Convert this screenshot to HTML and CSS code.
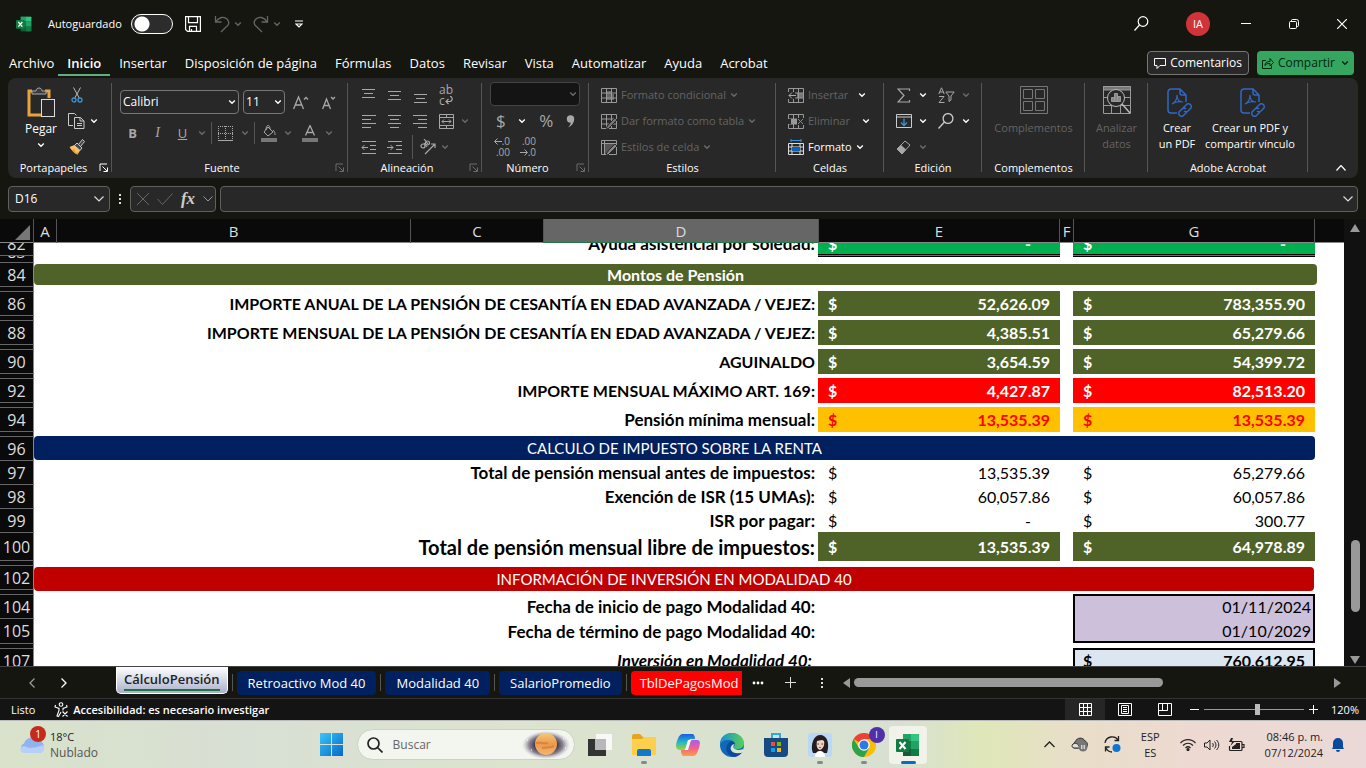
FILE: index.html
```html
<!DOCTYPE html>
<html lang="es">
<head>
<meta charset="utf-8">
<title>Excel</title>
<link rel="stylesheet" href="styles.css">
</head>
<body>
<svg class="defs" aria-hidden="true">
  <symbol id="chev" viewBox="0 0 8 8"><path d="M1.2 2.6 4 5.2 6.8 2.6" fill="none" stroke="currentColor" stroke-width="1.4"/></symbol>
  <symbol id="launch" viewBox="0 0 10 10"><path d="M1 8V1h7M3.500 3.500 8 8M8.500 4.500v4h-4" fill="none" stroke="currentColor"/></symbol>
  <symbol id="excel" viewBox="0 0 24 24"><path d="M7 1h16v22H7z" fill="#185c37"/><path d="M7 1h8v7H7z" fill="#21a366"/><path d="M15 1h7a1 1 0 0 1 1 1v6h-8z" fill="#33c481"/><path d="M7 8h8v8H7z" fill="#107c41"/><path d="M15 8h8v8h-8z" fill="#21a366"/><path d="M15 16h8v7h-8z" fill="#107c41"/><rect y="6" width="13" height="13" rx="1" fill="#107c41"/><path d="m3.500 9 6 7m0-7-6 7" stroke="#fff" stroke-width="2"/></symbol>
  <symbol id="pdf" viewBox="-3 -2 28 30" overflow="visible"><g fill="none" stroke="#3068c4" stroke-width="1.500"><path d="M11 25H5a3 3 0 0 1-3-3V4a3 3 0 0 1 3-3h9l6 6v7M14 1v4a2 2 0 0 0 2 2h4"/><path d="M6 16c4-2 5-6 5-9 0 4 2 7 6 7-4-1-8 0-11 2z" stroke-width="1.200"/><path d="m17 20 4-4a3 3 0 0 1 4 4l-3 3a3 3 0 0 1-4 0M20 21a3 3 0 0 0-4 0l-3 3a3 3 0 0 0 4 4l4-4"/></g></symbol>
  <symbol id="tbl" viewBox="0 0 16 15"><path d="M.5.500h15v14H.5zM.5 5h15M.5 10h15M5.500.500v14M10.500.500v14" fill="none" stroke="currentColor"/></symbol>
</svg>

<div class="window">
<header class="titlebar">
  <svg width="16" height="16"><use href="#excel"/></svg>
  <label class="autosave">Autoguardado <input type="checkbox" class="toggle"></label>
  <button class="plain save" aria-label="Guardar"><svg width="16" height="16" fill="none" stroke="#fff" stroke-width="1.200"><path d="M.6.600h14.800v14.800H2.600l-2-2zM3.500.600v6h9v-6M4.500 15.400v-5h7v5M6.500 15v-2"/></svg></button>
  <button class="plain dimmer" aria-label="Deshacer"><svg width="16" height="18" fill="none" stroke="currentColor" stroke-width="1.300"><path d="M1.500 1v6h6M1.500 7C5 2 10 1 13 4s2 6-1 8l-5 5"/></svg></button>
  <svg class="dimmer" width="8" height="8"><use href="#chev"/></svg>
  <button class="plain dimmer redo" aria-label="Rehacer"><svg width="16" height="18" fill="none" stroke="currentColor" stroke-width="1.300"><path d="M14.500 1v6h-6M14.500 7C11 2 6 1 3 4s-2 6 1 8l5 5"/></svg></button>
  <svg class="dimmer" width="8" height="8"><use href="#chev"/></svg>
  <button class="plain custom" aria-label="Personalizar"><svg width="8" height="8" fill="none" stroke="#fff" stroke-width="1.200"><path d="M0 1h8M1 4l3 3 3-3z"/></svg></button>
  <div class="grow"></div>
  <button class="winbtn" aria-label="Buscar"><svg width="15" height="15" fill="none" stroke="#fff" stroke-width="1.200"><circle cx="9" cy="5.500" r="4.800"/><path d="M5.500 9 .5 14.500"/></svg></button>
  <button class="avatar">IA</button>
  <button class="winbtn" aria-label="Minimizar"><svg width="10" height="10" stroke="#fff"><path d="M0 4.500h10"/></svg></button>
  <button class="winbtn" aria-label="Restaurar"><svg width="10" height="10" fill="none" stroke="#fff"><rect x=".5" y="2.500" width="7" height="7" rx="1"/><path d="M2.500 2.500v-1a1 1 0 0 1 1-1h4a2 2 0 0 1 2 2v4a1 1 0 0 1-1 1h-1"/></svg></button>
  <button class="winbtn" aria-label="Cerrar"><svg width="10" height="10" stroke="#fff" stroke-width="1.200"><path d="m0 0 10 10M10 0 0 10"/></svg></button>
</header>

<nav class="tabs">
  <a href="#">Archivo</a><a href="#" class="on">Inicio</a><a href="#">Insertar</a><a href="#">Disposición de página</a><a href="#">Fórmulas</a><a href="#">Datos</a><a href="#">Revisar</a><a href="#">Vista</a><a href="#">Automatizar</a><a href="#">Ayuda</a><a href="#">Acrobat</a>
  <div class="grow"></div>
  <button class="comments"><svg width="12" height="12" fill="none" stroke="#fff"><path d="M.5 1.500h11v7H6l-3 3v-3H.5z"/></svg>Comentarios</button>
  <button class="share"><svg width="12" height="12" fill="none" stroke="currentColor"><path d="M4 3.500H.5v8h9v-3M3 8.500c0-3 2-4 5-4v-3l3.500 4L8 9V6.500c-3 0-4 .500-5 2z"/></svg>Compartir<svg class="end" width="8" height="8"><use href="#chev"/></svg></button>
</nav>

<section class="ribbon">
  <div class="group g-clip">
    <div class="body clip">
      <button class="big paste"><svg width="28" height="30" fill="none"><path d="M5 4H2v24h12M18 4h4v7" stroke="#e8a33d" stroke-width="3"/><path d="M5 7V4h4c0-4 6-4 6 0h4v3z" fill="#3a3a3a" stroke="#aaa"/><rect x="14.500" y="12.500" width="13" height="17" fill="#282828" stroke="#ddd"/></svg>Pegar<svg width="8" height="8"><use href="#chev"/></svg></button>
      <div class="stack">
        <button class="plain" aria-label="Cortar"><svg width="12" height="16" fill="none"><path d="m2.500.500 6 11M9.500.500l-6 11" stroke="#bbb"/><circle cx="3" cy="13" r="2" stroke="#3b93d8" stroke-width="1.300"/><circle cx="9" cy="13" r="2" stroke="#3b93d8" stroke-width="1.300"/></svg></button>
        <div class="row"><button class="plain" aria-label="Copiar"><svg width="17" height="16" fill="none" stroke="#ccc"><path d="M5 12.500H.5V.500h6l2 2M6.500 4.500h6l3.500 3.500v7.500H6.500zM12 4.500V8h4M9 10.500h5M9 12.500h5"/></svg></button><svg width="8" height="8"><use href="#chev"/></svg></div>
        <button class="plain" aria-label="Copiar formato"><svg width="16" height="16"><path d="m.5 8 5-2 6 5-3 4.500c-3-1-6-4-8-7.500z" fill="#f3c26b"/><path d="m3 11 2-1 2 4 3-1-1.500 2.500C6 14.500 4.500 13 3 11z" fill="#e8972d"/><path d="M5.500 6.500 8 4l5 5-2 2.500z" fill="#444" stroke="#ccc"/><path d="m9.500 5.500 4-5 2 2-4 5z" fill="#444" stroke="#ccc"/></svg></button>
      </div>
    </div>
    <div class="cap">Portapapeles<svg class="launch" width="10" height="10"><use href="#launch"/></svg></div>
  </div>
  <div class="group g-font">
    <div class="body font">
      <div class="row">
        <label class="combo wide"><select aria-label="Fuente"><option>Calibri</option></select><svg width="8" height="8"><use href="#chev"/></svg></label>
        <label class="combo"><select aria-label="Tamaño"><option>11</option></select><svg width="8" height="8"><use href="#chev"/></svg></label>
        <button class="plain grey fa" aria-label="Aumentar"><svg width="16" height="15" fill="none" stroke="currentColor" stroke-width="1.300"><path d="M.6 14 5.500 2l5 12M2.300 10h6.500M11 4.500l2-2 2 2"/></svg></button>
        <button class="plain grey fa" aria-label="Reducir"><svg width="16" height="15" fill="none" stroke="currentColor" stroke-width="1.300"><path d="M2.600 14 6.500 4l4 10M4 10.500h5M11 2l2 2 2-2"/></svg></button>
      </div>
      <div class="row fmt">
        <button class="plain grey"><b>B</b></button><button class="plain grey slant">I</button><button class="plain grey"><u>U</u></button><svg class="dim" width="8" height="8"><use href="#chev"/></svg><i class="vs"></i>
        <button class="plain grey" aria-label="Bordes"><svg width="15" height="15" fill="none" stroke="currentColor" stroke-dasharray="1 1"><path d="M.5 0v14M14.500 0v14M0 .500h15M7.500 0v14M0 7.500h15"/><path d="M0 14.500h15" stroke-dasharray="none"/></svg></button><svg class="dim" width="8" height="8"><use href="#chev"/></svg><i class="vs"></i>
        <button class="plain grey" aria-label="Relleno"><svg width="16" height="17" fill="none" stroke="currentColor"><path d="m7 2 5 5-5 4-4-4zM5 5c0-6 4-6 4-1M12 5c2 2 2 3 2 5"/><path d="M0 13h16v4H0z" fill="#777" stroke="none"/></svg></button><svg class="dim" width="8" height="8"><use href="#chev"/></svg>
        <button class="plain grey" aria-label="Color"><svg width="16" height="17" fill="none" stroke="currentColor" stroke-width="1.300"><path d="M3.500 10.500 8 .500l4.500 10M5 7.500h6"/><path d="M0 13h16v4H0z" fill="#777" stroke="none"/></svg></button><svg class="dim" width="8" height="8"><use href="#chev"/></svg>
      </div>
    </div>
    <div class="cap">Fuente<svg class="launch dim" width="10" height="10"><use href="#launch"/></svg></div>
  </div>
  <div class="group g-align">
    <div class="body cells">
      <button class="plain grey" aria-label="Arriba"><svg width="15" height="15" stroke="currentColor"><path d="M1 1.500h13M3 5.500h9M1 9.500h13"/></svg></button><button class="plain grey" aria-label="Medio"><svg width="15" height="15" stroke="currentColor"><path d="M1 3.500h13M3 7.500h9M1 11.500h13"/></svg></button><button class="plain grey" aria-label="Abajo"><svg width="15" height="15" stroke="currentColor"><path d="M1 6.500h13M3 10.500h9M1 14.500h13"/></svg></button><button class="plain grey wrap" aria-label="Ajustar texto"><span>ab</span><span>c<svg width="8" height="9" fill="none" stroke="currentColor" stroke-width="1.200"><path d="M5 .500c3 0 3 5-.500 5H1M3.500 3 1 5.500 3.500 8"/></svg></span></button><span></span>
      <button class="plain grey" aria-label="Izquierda"><svg width="15" height="15" stroke="currentColor"><path d="M1 1.500h14M1 5.500h9M1 9.500h14M1 13.500h9"/></svg></button><button class="plain grey" aria-label="Centro"><svg width="15" height="15" stroke="currentColor"><path d="M1 1.500h13M3 5.500h9M1 9.500h13M3 13.500h9"/></svg></button><button class="plain grey" aria-label="Derecha"><svg width="15" height="15" stroke="currentColor"><path d="M0 1.500h14M5 5.500h9M0 9.500h14M5 13.500h9"/></svg></button><button class="plain grey" aria-label="Combinar"><svg width="15" height="15" fill="none" stroke="currentColor"><path d="M.5.500h14v14H.5zM.5 3.500h14M.5 11.500h14M7.500.500v3M7.500 11.500v3M3 7.500h9M5 5.500l-2 2 2 2M10 5.500l2 2-2 2"/></svg></button><svg class="dim" width="8" height="8"><use href="#chev"/></svg>
      <button class="plain grey" aria-label="Menos sangría"><svg width="15" height="15" fill="none" stroke="currentColor"><path d="M1 1.500h14M9 5.500h6M9 9.500h6M1 13.500h14M1 7.500h6M3.500 5l-2.500 2.500L3.500 10"/></svg></button><button class="plain grey" aria-label="Más sangría"><svg width="15" height="15" fill="none" stroke="currentColor"><path d="M1 1.500h14M9 5.500h6M9 9.500h6M1 13.500h14M0 7.500h6M3.500 5 6 7.500 3.500 10"/></svg></button><button class="plain grey ori" aria-label="Orientación"><svg width="18" height="16" fill="none" stroke="currentColor" stroke-width="1.200"><circle cx="4" cy="7" r="2"/><path d="m5 4 3 4"/><circle cx="8.500" cy="4" r="2"/><path d="m5 0 4 5M6 15 16 5M12 5h4v4"/></svg><svg class="dim" width="8" height="8"><use href="#chev"/></svg></button>
    </div>
    <div class="cap">Alineación<svg class="launch dim" width="10" height="10"><use href="#launch"/></svg></div>
  </div>
  <div class="group g-num">
    <div class="body num">
      <label class="combo black"><select aria-label="Formato de número"><option></option></select><svg class="dim" width="8" height="8"><use href="#chev"/></svg></label>
      <div class="row syms"><button class="plain grey">$</button><svg width="8" height="8"><use href="#chev"/></svg><button class="plain grey">%</button><button class="plain grey" aria-label="Millares"><svg width="9" height="13"><circle cx="4.500" cy="4" r="3.700" fill="currentColor"/><path d="M8 4c0 4-2 7-6 8.500C4.500 10 5 8 5 6z" fill="currentColor"/></svg></button></div>
      <div class="row dec"><button class="plain grey"><span><svg width="8" height="7" fill="none" stroke="currentColor"><path d="M8 3.500H1M3.500.500l-3 3 3 3"/></svg>.0</span><span>.00</span></button><button class="plain grey"><span>.00</span><span><svg width="8" height="7" fill="none" stroke="currentColor"><path d="M0 3.500h7M4.500.500l3 3-3 3"/></svg>.0</span></button></div>
    </div>
    <div class="cap">Número<svg class="launch dim" width="10" height="10"><use href="#launch"/></svg></div>
  </div>
  <div class="group g-style">
    <div class="body list off">
      <button><svg width="16" height="15"><path d="M6 3h4v3h3v6H6z" fill="#666"/><use href="#tbl"/></svg>Formato condicional<svg class="dim" width="8" height="8"><use href="#chev"/></svg></button>
      <button><svg width="16" height="15"><use href="#tbl"/><path d="m5 14 3-4 6-6 2 2-6 6-3 3z" fill="#777" stroke="#282828"/></svg>Dar formato como tabla<svg class="dim" width="8" height="8"><use href="#chev"/></svg></button>
      <button><svg width="16" height="15"><path d="M.5.500h15v14H.5zM.5 3.500h15M3.500.500v14" fill="none" stroke="currentColor"/><path d="M4 4h9v6l-6 4H4z" fill="#555"/><path d="m5 14 3-4 6-6 2 2-6 6-3 3z" fill="#888" stroke="#282828"/></svg>Estilos de celda<svg class="dim" width="8" height="8"><use href="#chev"/></svg></button>
    </div>
    <div class="cap">Estilos</div>
  </div>
  <div class="group g-cell">
    <div class="body list off">
      <button><svg width="16" height="15"><path d="M9 5h6v5H9z" fill="#777"/><use href="#tbl"/><path d="M0 4h7v7H0z" fill="#282828"/><path d="M1 7.500h7M4 4.500l-3 3 3 3" fill="none" stroke="#aaa"/></svg><span class="grow">Insertar</span><svg class="lit" width="8" height="8"><use href="#chev"/></svg></button>
      <button class="del"><svg width="16" height="15"><use href="#tbl"/><path d="M9 4h7v7H9zM0 5h3v5H0z" fill="#282828"/><path d="M3 5h6v5H3z" fill="#999"/><path d="m10 5 5 5m0-5-5 5" stroke="#888"/></svg><span class="grow">Eliminar</span><svg class="lit" width="8" height="8"><use href="#chev"/></svg></button>
      <button class="lit"><svg width="16" height="16" fill="none"><path d="M.5 4.500h15v11H.5zM.5 8h15M.5 12h15M4 4v11M12 4v11" stroke="#ddd"/><path d="M4 8h8v4H4z" fill="#0a64b4"/><path d="M3 1.500h10M3 0v3M13 0v3" stroke="#3b93d8"/></svg>Formato<svg width="8" height="8"><use href="#chev"/></svg></button>
    </div>
    <div class="cap">Celdas</div>
  </div>
  <div class="group g-edit">
    <div class="body edit">
      <button class="plain grey" aria-label="Suma"><svg width="14" height="15" fill="none" stroke="currentColor" stroke-width="1.200"><path d="M12.500 3V1H1l6 6.500L1 14h11.500v-2"/></svg></button><svg width="8" height="8"><use href="#chev"/></svg><button class="plain grey az" aria-label="Ordenar y filtrar"><svg width="17" height="17" fill="none" stroke="currentColor"><path d="M.8 7 3.500.800 6.200 7M1.600 5h3.800M1 9.500h5L1 15.500h5.500M7.800 5h8.400L13 9v4l-2 1.500V9z"/></svg></button><svg class="dim" width="8" height="8"><use href="#chev"/></svg>
      <button class="plain" aria-label="Rellenar"><svg width="16" height="14" fill="none" stroke="#ccc"><path d="M.5.500h15v13H.5zM.5 3h15"/><path d="M8 4.500V11M5 8.500l3 3 3-3" stroke="#3b93d8" stroke-width="1.300"/></svg></button><svg width="8" height="8"><use href="#chev"/></svg><button class="plain" aria-label="Buscar y seleccionar"><svg width="16" height="16" fill="none" stroke="#ccc" stroke-width="1.300"><circle cx="10" cy="5.500" r="4.900"/><path d="M6.500 9 .5 15.500"/></svg></button><svg width="8" height="8"><use href="#chev"/></svg>
      <button class="plain grey" aria-label="Borrar"><svg width="16" height="15"><path d="m1 9 8-8 5 4-8 9z" fill="none" stroke="currentColor"/><path d="m1 9 4-4 5 4.500-4 4.500z" fill="currentColor"/></svg></button><svg class="dim" width="8" height="8"><use href="#chev"/></svg>
    </div>
    <div class="cap">Edición</div>
  </div>
  <div class="group g-comp">
    <div class="body"><button class="big off"><svg width="28" height="28" fill="none" stroke="#777"><path d="M.5.500h27v27H.5zM3.500 3.500h9v9h-9zM15.500 3.500h9v9h-9zM3.500 15.500h9v9h-9zM15.500 15.500h9v9h-9z"/></svg>Complementos</button></div>
    <div class="cap">Complementos</div>
  </div>
  <div class="group g-an">
    <div class="body"><button class="big off"><svg width="28" height="28" fill="none" stroke="#999"><path d="M0 0h28v4H0z" fill="#777"/><path d="M.5.500h27v27H.5zM.5 11.500h27M.5 19.500h27M8.500 19v8M17.500 19v8"/><circle cx="13" cy="12" r="8.500" fill="#282828" stroke="#bbb"/><path d="m19 18 8 9" stroke="#bbb" stroke-width="1.500"/><path d="M8.500 11.500h3v4h-3zM11.500 7.500h3v8h-3zM14.500 10.500h3v5h-3z" fill="#888"/></svg>Analizar<br>datos</button></div>
    <div class="cap"></div>
  </div>
  <div class="group g-pdf">
    <div class="body pdfs"><button class="big"><svg width="28" height="30"><use href="#pdf"/></svg>Crear<br>un PDF</button><button class="big"><svg width="28" height="30"><use href="#pdf"/></svg>Crear un PDF y<br>compartir vínculo</button></div>
    <div class="cap">Adobe Acrobat</div>
  </div>
  <button class="collapse" aria-label="Contraer"><svg width="10" height="6" fill="none" stroke="#fff" stroke-width="1.200"><path d="m.5 5.500 4.500-5 4.500 5"/></svg></button>
</section>

<section class="fbar">
  <label class="fbox name"><input type="text" value="D16" aria-label="Cuadro de nombres"><svg width="10" height="6" fill="none" stroke="#ddd" stroke-width="1.200"><path d="m.5.500 4.500 4.500L9.500.500"/></svg></label>
  <span class="dots"></span>
  <div class="fbox fx"><button class="plain dimmer" aria-label="Cancelar"><svg width="12" height="12" stroke="currentColor"><path d="m0 0 12 12M12 0 0 12"/></svg></button><button class="plain dimmer" aria-label="Introducir"><svg width="16" height="12" fill="none" stroke="currentColor"><path d="m.5 6 5 5.500L15.500.500"/></svg></button><button class="plain fn">fx</button><svg width="10" height="6" fill="none" stroke="#999"><path d="m.5.500 4.500 4.500L9.500.500"/></svg></div>
  <label class="fbox formula"><input type="text" aria-label="Fórmula"><svg width="10" height="6" fill="none" stroke="#ddd" stroke-width="1.200"><path d="m.5.500 4.500 4.500L9.500.500"/></svg></label>
</section>

<main class="sheet">
  <div class="pane">
    <div class="colhead"><span class="corner"><svg width="15" height="15"><path d="M15 0v15H0z" fill="#777"/></svg></span><span>A</span><span>B</span><span>C</span><span class="sel">D</span><span>E</span><span>F</span><span>G</span></div>
    <div class="view">
    <table>
      <colgroup><col class="ch"><col class="ca"><col class="cb"><col class="cc"><col class="cd"><col class="ce"><col class="cf"><col class="ce"><col></colgroup>
      <tr class="r24"><th>82</th><td colspan="4" class="lab">Ayuda asistencial por soledad:</td><td rowspan="2" class="top"><div class="acc total"><span>$</span><span class="dash">-</span></div></td><td></td><td rowspan="2" class="top"><div class="acc total"><span>$</span><span class="dash">-</span></div></td><td></td></tr>
      <tr class="r7"><th><div class="cut"><span>83</span></div></th><td colspan="4"></td><td></td><td></td></tr>
      <tr class="r24"><th>84</th><td colspan="8" class="top"><div class="bar green">Montos de Pensión</div></td></tr>
      <tr class="r5"><th></th></tr>
      <tr class="r24"><th>86</th><td colspan="4" class="lab caps">IMPORTE ANUAL DE LA PENSIÓN DE CESANTÍA EN EDAD AVANZADA / VEJEZ:</td><td class="olive"><div class="acc"><span>$</span><span>52,626.09</span></div></td><td></td><td class="olive"><div class="acc"><span>$</span><span>783,355.90</span></div></td></tr>
      <tr class="r5"><th></th></tr>
      <tr class="r24"><th>88</th><td colspan="4" class="lab caps">IMPORTE MENSUAL DE LA PENSIÓN DE CESANTÍA EN EDAD AVANZADA / VEJEZ:</td><td class="olive"><div class="acc"><span>$</span><span>4,385.51</span></div></td><td></td><td class="olive"><div class="acc"><span>$</span><span>65,279.66</span></div></td></tr>
      <tr class="r5"><th></th></tr>
      <tr class="r24"><th>90</th><td colspan="4" class="lab caps">AGUINALDO</td><td class="olive"><div class="acc"><span>$</span><span>3,654.59</span></div></td><td></td><td class="olive"><div class="acc"><span>$</span><span>54,399.72</span></div></td></tr>
      <tr class="r5"><th></th></tr>
      <tr class="r24"><th>92</th><td colspan="4" class="lab caps">IMPORTE MENSUAL MÁXIMO ART. 169:</td><td class="red"><div class="acc"><span>$</span><span>4,427.87</span></div></td><td></td><td class="red"><div class="acc"><span>$</span><span>82,513.20</span></div></td></tr>
      <tr class="r5"><th></th></tr>
      <tr class="r24"><th>94</th><td colspan="4" class="lab">Pensión mínima mensual:</td><td class="amber"><div class="acc"><span>$</span><span>13,535.39</span></div></td><td></td><td class="amber"><div class="acc"><span>$</span><span>13,535.39</span></div></td></tr>
      <tr class="r5"><th></th></tr>
      <tr class="r24"><th>96</th><td colspan="7" class="top"><div class="bar navy">CALCULO DE IMPUESTO SOBRE LA RENTA</div></td></tr>
      <tr class="r24"><th>97</th><td colspan="4" class="lab">Total de pensión mensual antes de impuestos:</td><td><div class="acc"><span>$</span><span>13,535.39</span></div></td><td></td><td><div class="acc"><span>$</span><span>65,279.66</span></div></td></tr>
      <tr class="r24"><th>98</th><td colspan="4" class="lab">Exención de ISR (15 UMAs):</td><td><div class="acc"><span>$</span><span>60,057.86</span></div></td><td></td><td><div class="acc"><span>$</span><span>60,057.86</span></div></td></tr>
      <tr class="r24"><th>99</th><td colspan="4" class="lab">ISR por pagar:</td><td><div class="acc"><span>$</span><span class="dash">-</span></div></td><td></td><td><div class="acc"><span>$</span><span>300.77</span></div></td></tr>
      <tr class="r28"><th>100</th><td colspan="4" class="lab large">Total de pensión mensual libre de impuestos:</td><td class="olive"><div class="acc"><span>$</span><span>13,535.39</span></div></td><td></td><td class="olive"><div class="acc"><span>$</span><span>64,978.89</span></div></td></tr>
      <tr class="r5"><th></th></tr>
      <tr class="r24"><th>102</th><td colspan="7" rowspan="2" class="top"><div class="bar crimson">INFORMACIÓN DE INVERSIÓN EN MODALIDAD 40</div></td></tr>
      <tr class="r5"><th></th></tr>
      <tr class="r24"><th>104</th><td colspan="4" class="lab">Fecha de inicio de pago Modalidad 40:</td><td></td><td></td><td class="date first">01/11/2024</td></tr>
      <tr class="r25"><th>105</th><td colspan="4" class="lab">Fecha de término de pago Modalidad 40:</td><td></td><td></td><td class="date last">01/10/2029</td></tr>
      <tr class="r5"><th></th></tr>
      <tr class="r24"><th>107</th><td colspan="4" class="lab ital">Inversión en Modalidad 40:</td><td></td><td></td><td class="invest"><div class="acc"><span>$</span><span>760,612.95</span></div></td></tr>
    </table>
    </div>
  </div>
  <div class="vscroll"><svg width="10" height="8"><path d="m5 0 5 8H0z" fill="#999"/></svg><div class="track"><div class="thumb"></div></div><svg width="10" height="8"><path d="M0 0h10L5 8z" fill="#999"/></svg></div>
</main>

<nav class="sheets">
  <button class="plain nav" aria-label="Anterior"><svg width="6" height="10" fill="none" stroke="#999" stroke-width="1.300"><path d="m5.500.500-4.500 4.500 4.500 4.500"/></svg></button>
  <button class="plain nav" aria-label="Siguiente"><svg width="6" height="10" fill="none" stroke="#fff" stroke-width="1.300"><path d="m.5.500 4.500 4.500-4.500 4.500"/></svg></button>
  <div class="tablist"><button class="st active"><span>CálculoPensión</span></button><i></i><button class="st blue">Retroactivo Mod 40</button><i></i><button class="st blue">Modalidad 40</button><i></i><button class="st blue">SalarioPromedio</button><i></i><button class="st redtab">TblDePagosMod</button></div>
  <button class="plain more" aria-label="Más hojas"><svg width="12" height="4" fill="#fff"><circle cx="2" cy="2" r="1.400"/><circle cx="6" cy="2" r="1.400"/><circle cx="10" cy="2" r="1.400"/></svg></button>
  <button class="plain more" aria-label="Hoja nueva"><svg width="11" height="11" stroke="#ddd"><path d="M5.500 0v11M0 5.500h11"/></svg></button>
  <button class="plain more" aria-label="Opciones"><span class="dots"></span></button>
  <div class="hscroll"><svg width="8" height="10"><path d="M8 0v10L1 5z" fill="#999"/></svg><div class="htrack"><div class="thumb"></div></div><svg width="8" height="10"><path d="M0 0v10l7-5z" fill="#999"/></svg></div>
</nav>

<footer class="status">
  <span>Listo</span>
  <button class="plain acces"><svg width="15" height="15" fill="none" stroke="#fff" stroke-width="1.100"><circle cx="7" cy="2.500" r="1.800"/><path d="M1.500 3 1 5l4 1.500v2L3 14l1.500.500L7 10M12.500 3l.5 2-4 1.500v2M8.500 9.500l5 5M13.500 9.500l-5 5"/></svg><b>Accesibilidad: es necesario investigar</b></button>
  <div class="grow"></div>
  <button class="vw on" aria-label="Normal"><svg width="13" height="13" fill="none" stroke="#fff"><path d="M.5.500h12v12H.5zM4.500.500v12M8.500.500v12M.5 4.500h12M.5 8.500h12"/></svg></button>
  <button class="vw" aria-label="Diseño"><svg width="14" height="13" fill="none" stroke="#fff"><path d="M.5.500h13v12H.5zM3.500 2.500h7v8h-7zM5 4.500h4M5 6.500h4M5 8.500h4"/></svg></button>
  <button class="vw" aria-label="Saltos"><svg width="14" height="13" fill="none" stroke="#fff"><path d="M.5.500h13v12H.5zM4.500.500v7M9.500.500v7M.5 7.500h9"/></svg></button>
  <button class="plain zb" aria-label="Alejar"><svg width="9" height="9" stroke="#fff"><path d="M0 4.500h9"/></svg></button>
  <input type="range" class="zoom" min="0" max="100" value="54" aria-label="Zoom">
  <button class="plain zb" aria-label="Acercar"><svg width="9" height="9" stroke="#fff"><path d="M4.500 0v9M0 4.500h9"/></svg></button>
  <span class="pct">120%</span>
</footer>
</div>

<footer class="taskbar">
  <div class="weather"><div class="cloud"><svg width="26" height="18"><path d="M6 17a5 5 0 0 1-1-9.500C7 1 15 0 18 5c5-1 7 3 7 6s-2 6-5 6z" fill="#8fb4ee"/><path d="M6 17c-6 0-6-6-1-7 5 3 12 2 19-1 3 4 0 8-4 8z" fill="#b7d0f7"/></svg><span class="badge">1</span></div><div>18°C<br><small>Nublado</small></div></div>
  <div class="apps">
    <button class="app" aria-label="Inicio"><svg width="24" height="24"><defs><linearGradient id="w" x2="1" y2="1"><stop stop-color="#3cc4f8"/><stop offset="1" stop-color="#0568c8"/></linearGradient></defs><path d="M0 0h11v11H0zM12 0h11v11H12zM0 12h11v11H0zM12 12h11v11H12z" fill="url(#w)"/></svg></button>
    <label class="search"><svg width="16" height="16" fill="none" stroke="#222" stroke-width="1.700"><circle cx="6.500" cy="6.500" r="5.500"/><path d="m10.500 10.500 5 5"/></svg><input type="search" placeholder="Buscar" aria-label="Buscar"><svg width="48" height="28"><defs><radialGradient id="h"><stop offset=".4" stop-color="#2b2438"/><stop offset=".7" stop-color="#6c6478" stop-opacity=".8"/><stop offset="1" stop-color="#b8b0c0" stop-opacity="0"/></radialGradient><linearGradient id="pl" x2="0" y2="1"><stop stop-color="#f7c87c"/><stop offset=".5" stop-color="#eb9a4c"/><stop offset="1" stop-color="#f0b870"/></linearGradient></defs><ellipse cx="24" cy="14" rx="24" ry="14" fill="url(#h)"/><circle cx="24" cy="13" r="11" fill="url(#pl)"/><path d="M14 12c5-1 8 1 12 0M20 17c4-1 8 0 12-2" fill="none" stroke="#dc8340" stroke-width="2"/><path d="M5 9h1M9 19h1M41 8h1M43 17h1" stroke="#fff"/></svg></label>
    <button class="app" aria-label="Vista de tareas"><svg width="24" height="22"><path d="M8 0h16v16H8z" fill="#f8f8f8"/><path d="M0 5h18v17H0z" fill="#333"/><path d="M7 5h11v11H7z" fill="#b8b8b8"/></svg></button>
    <button class="app run" aria-label="Explorador"><svg width="24" height="22"><path d="M0 2a2 2 0 0 1 2-2h6l3 3h13v18H0z" fill="#e5a51f"/><path d="M0 5h10l2-2h12v18H0z" fill="#fcd04d"/><path d="M5 22v-5a2 2 0 0 1 2-2h10a2 2 0 0 1 2 2v5z" fill="#1478c8"/></svg></button>
    <button class="app" aria-label="Copilot"><svg width="24" height="22"><defs><linearGradient id="c1" x2="0" y2="1"><stop stop-color="#1d5be0"/><stop offset=".5" stop-color="#20b8c8"/><stop offset="1" stop-color="#a6d030"/></linearGradient><linearGradient id="c2" x2="0" y2="1"><stop stop-color="#a85cf0"/><stop offset=".5" stop-color="#f06090"/><stop offset="1" stop-color="#f8a040"/></linearGradient></defs><path d="M7 0h9c2 0 3 2 3 5h-4c-3 0-4 5-5 9-1 2-2 2-4 2H4c-4 0-5-4-3-9 2-5 3-7 6-7z" fill="url(#c1)"/><path d="M17 22H8c-2 0-3-2-3-6h4c3 0 4-4 5-8 1-2 2-2 4-2h3c4 0 3 4 2 8-2 6-3 8-6 8z" fill="url(#c2)"/><path d="m12 6 3 0-3 10H9z" fill="#f4f4ea"/></svg></button>
    <button class="app" aria-label="Edge"><svg width="24" height="24"><defs><linearGradient id="e"><stop stop-color="#1490d8"/><stop offset="1" stop-color="#5cd050"/></linearGradient></defs><circle cx="12" cy="12" r="12" fill="#1268b8"/><path d="M0 12C0 3 6 0 12 0s12 5 12 10c0 4-3 6-7 6s-4-2-2-4c0-3-3-5-7-5-4 0-7 2-8 5z" fill="url(#e)"/><path d="M15 12c-3 0-6 2-4 5 3 4 8 4 12 1-1 2-4 5-8 6C5 23 4 12 11 8c3 0 4 2 4 4z" fill="#0b4a98"/><path d="M15 11c-3 2-2 6 4 6 2 0 4-1 4-1l1 3c-5 2-11 2-13-2-1-3 1-6 4-6z" fill="#dbe3d6"/></svg></button>
    <button class="app" aria-label="Tienda"><svg width="24" height="24"><path d="M8 5V1h8v4" fill="none" stroke="#30a8e8" stroke-width="2"/><path d="M0 5h24v15a4 4 0 0 1-4 4H4a4 4 0 0 1-4-4z" fill="#174a84"/><path d="M7 9h4v4H7z" fill="#f25022"/><path d="M13 9h4v4h-4z" fill="#7fba00"/><path d="M7 15h4v4H7z" fill="#00a4ef"/><path d="M13 15h4v4h-4z" fill="#ffb900"/></svg></button>
    <button class="app run" aria-label="Avatar"><svg width="24" height="24"><rect width="24" height="24" rx="3" fill="#b9d8f5"/><path d="M5 20C2 14 5 2 12 2s10 8 7 18z" fill="#241c20"/><path d="M9 8c2 0 5-2 7 0 1 4-1 8-4 9-3-1-4-4-3-9z" fill="#f3cfc0"/><path d="M7 24c0-5 3-6 5-6s5 1 5 6z" fill="#fff"/><path d="M9.500 11h1.500M13.500 11H15" stroke="#333"/><path d="M11 14.500h2" stroke="#c44"/></svg></button>
    <button class="app run" aria-label="Chrome"><svg width="24" height="24"><circle cx="12" cy="12" r="12" fill="#fbbc04"/><path d="M12 12 1.600 6A12 12 0 0 1 22.400 6H12z" fill="#ea4335"/><path d="M1.600 6A12 12 0 0 0 12 24l5-9H7z" fill="#2ba24c"/><circle cx="12" cy="12" r="5.800" fill="#fff"/><circle cx="12" cy="12" r="4.500" fill="#2f78e8"/></svg><span class="badge prof">I</span></button>
    <button class="app cur" aria-label="Excel"><svg width="24" height="24"><use href="#excel"/></svg></button>
  </div>
  <div class="tray">
    <svg width="11" height="7" fill="none" stroke="#222" stroke-width="1.300"><path d="m.5 6 5-5 5 5"/></svg>
    <svg width="17" height="15"><path d="M3 11a4 4 0 0 1 1-6c2-5 8-5 10-1 3 1 3 5 1 7z" fill="#777" stroke="#333"/><path d="M1 8c3-3 6-2 8 3H3C1 11 1 9 1 8z" fill="#ddd" stroke="#333"/><circle cx="12" cy="10" r="4.500" fill="#777"/><path d="M10.800 8v4M13.200 8v4" stroke="#fff"/></svg>
    <svg width="17" height="17" fill="none" stroke="#222" stroke-width="1.300"><path d="M1 7c1-7 10-8 13-3M14.500 0v4.500h-4M1.500 15.500V11h4M2 12c1 2 3 4 6 4"/><circle cx="12.500" cy="12" r="4" fill="#0a78d4" stroke="none"/></svg>
    <div class="lang">ESP<br>ES</div>
    <div class="net">
      <svg width="16" height="12" fill="none" stroke="#222" stroke-width="1.200"><path d="M.5 4c4-4.500 11-4.500 15 0M3 6.500c3-3 7-3 10 0M5.500 9c1.500-1.500 3.500-1.500 5 0"/><circle cx="8" cy="10.500" r="1" fill="#222"/></svg>
      <svg width="16" height="12" fill="none" stroke="#222"><path d="M.5 4v4H3l3 3V1L3 4zM8.500 4c1 1 1 3 0 4M10.500 2.500c2 2 2 5 0 7M12.500 1c3 3 3 7 0 10"/></svg>
      <svg width="17" height="14" fill="none" stroke="#222" stroke-width="1.200"><path d="M4 3.500h9a1 1 0 0 1 1 1v7a1 1 0 0 1-1 1H2.500a1 1 0 0 1-1-1V8M14.500 6.500H16v3h-1.500"/><path d="M8 5h4v6H4V9l4-3z" fill="#222" stroke="none"/><path d="m3 0-2 4h3L2.500 8 7 3H4l1-3z" fill="#222" stroke="none"/></svg>
    </div>
    <div class="clock">08:46 p. m.<br>07/12/2024</div>
    <svg width="14" height="16" fill="#0a4a9c"><path d="M1 12 2 10V6a5 5 0 0 1 10 0v4l1 2zM5 13h4a2 2 0 0 1-4 0z"/></svg>
  </div>
</footer>
</body>
</html>
```
FILE: styles.css
```css
* { box-sizing: border-box; }
html, body { height: 100%; }
body {
  margin: 0;
  display: flex;
  flex-direction: column;
  overflow: hidden;
  font: 12px/16px "Open Sans", "Noto Sans", sans-serif;
  color: #fff;
  background: #15160f;
}
button, input, select { font: inherit; color: inherit; margin: 0; }
button { border: 0; background: none; padding: 0; white-space: nowrap; }
svg { flex: none; display: block; }
.defs { position: absolute; width: 0; height: 0; }
.grow { flex: 1; }
.row { display: flex; align-items: center; }
.plain { display: flex; align-items: center; justify-content: center; }
.grey { color: #a8a8a8; }
.dim { color: #6c6c6c; }
.dimmer { color: #666; }
.window { flex: 1; min-height: 0; display: flex; flex-direction: column; }

/* Title bar */
.titlebar { display: flex; align-items: center; height: 47px; padding-left: 16px; }
.autosave { display: flex; align-items: center; gap: 9px; margin-left: 16px; font-size: 11px; }
.toggle {
  appearance: none; width: 42px; height: 20px; margin: 0;
  border: 1px solid #fff; border-radius: 10px; background: radial-gradient(circle at 10px 9px, #fff 7px, #2c2c2c 8px);
}
.save { margin: 0 13px 0 12px; }
.titlebar > svg.dimmer { margin-left: 4px; }
.redo { margin-left: 11px; }
.custom { margin-left: 14px; }
.winbtn { width: 48px; height: 47px; display: flex; align-items: center; justify-content: center; }
.avatar { width: 24px; height: 24px; margin: 0 12px 0 21px; border-radius: 50%; background: #d13438; font-size: 11px; }

/* Menu tabs */
.tabs { display: flex; align-items: center; height: 31px; padding: 0 12px 0 0; }
.tabs a { color: #fff; text-decoration: none; padding: 0 9px; height: 27px; line-height: 28px; font-size: 13px; }
.tabs a:first-child { padding-right: 4px; }
.tabs a.on { font-weight: 600; border-bottom: 2px solid #5fae7f; }
.comments, .share { height: 24px; border-radius: 4px; display: flex; align-items: center; gap: 4px; padding: 0 5px; }
.comments { border: 1px solid #777; background: #282828; padding: 0 6px; }
.share { margin-left: 8px; background: #35a660; color: #06250f; }
.share .end { margin-left: 2px; }

/* Ribbon */
.ribbon { display: flex; height: 100px; margin: 0 8px; border-radius: 8px; background: #282828; }
.group { position: relative; display: flex; flex-direction: column; padding: 4px 0 3px; }
.group::after { content: ""; position: absolute; right: 0; top: 5px; bottom: 6px; width: 1px; background: #555; }
.body { height: 78px; }
.cap { height: 15px; line-height: 15px; text-align: center; font-size: 11px; font-weight: 500; }
.launch { position: absolute; right: 3px; bottom: 5px; }
.g-clip { width: 104px; }
.g-font { width: 236px; }
.g-align { width: 134px; }
.g-num { width: 107px; }
.g-style { width: 187px; }
.g-cell { width: 108px; }
.g-edit { width: 98px; }
.g-comp { width: 103px; }
.g-an { width: 63px; }
.g-pdf { width: 160px; }
.g-clip .cap { padding-right: 13px; }
.g-font .cap, .g-align .cap, .g-num .cap { padding-right: 16px; }
.big { display: flex; flex-direction: column; align-items: center; width: 100%; padding-top: 5px; gap: 3px; }
.off { color: #646464; }
.clip { display: flex; }
.paste { width: 60px; padding-left: 6px; gap: 4px; }
.stack { display: flex; flex-direction: column; }
.stack > * { height: 26px; align-self: flex-start; }
.stack .row { gap: 5px; }
.stack > button { width: 17px; }
.font { padding: 8px 8px 0; }
.font .row { gap: 4px; }
.combo { display: flex; align-items: center; width: 43px; height: 24px; padding: 0 2px; border: 1px solid #777; border-radius: 4px; }
.combo select { appearance: none; border: 0; outline: 0; background: transparent; flex: 1; min-width: 0; padding: 0; font-size: 12px; }
.combo.wide { width: 122px; }
.fa { width: 24px; }
.font .fmt { height: 24px; margin-top: 7px; gap: 0; font-size: 13px; }
.fmt button { width: 25px; height: 24px; }
.fmt .dim { margin: 0 5px 0 3px; }
.fmt .slant { font-style: italic; font-family: "Liberation Serif", serif; font-size: 14px; }
.vs { width: 1px; height: 22px; background: #555; margin-right: 1px; }
.cells { display: grid; grid-template: repeat(3, 26px) / repeat(4, 26px) 12px; align-items: center; justify-items: center; padding-left: 7px; }
.wrap { flex-direction: column; font-size: 12px; line-height: 11px; }
.cells .wrap span { display: flex; align-items: center; height: 11px; }
.cells .ori { grid-column: 3 / 5; gap: 4px; border-left: 1px solid #555; height: 24px; padding: 0 6px; }
.num { padding: 0 8px; }
.combo.black { width: 90px; background: #141414; border-color: #444; margin-bottom: 2px; }
.syms { height: 26px; font-size: 17px; justify-content: space-between; padding: 0 6px; }
.dec { height: 26px; gap: 9px; padding-left: 3px; font-size: 10px; line-height: 11px; }
.dec button { flex-direction: column; align-items: flex-end; width: 17px; }
.dec span { display: flex; align-items: center; }
.list { padding-left: 12px; }
.list button { display: flex; align-items: center; height: 26px; gap: 4px; }
.list.off button > svg:first-child { color: #999; }
.g-cell .list button { width: 78px; }
.g-cell .list .del { width: 82px; }
.g-cell .list .grow { text-align: left; }
.g-style .list, .g-cell .list { font-size: 11px; }
.lit { color: #fff; }
.edit { display: grid; grid-template: repeat(3, 26px) / 24px 14px 32px 8px; align-items: center; justify-items: center; padding-left: 8px; }
.pdfs { display: flex; align-items: flex-start; padding-left: 6px; }
.pdfs .big:first-child { width: 46px; }
.pdfs .big:last-child { width: 100px; }
.g-pdf .big, .g-an .big, .g-comp .big { display: block; font-size: 11px; padding-top: 4px; }
.g-an .big svg, .g-comp .big svg { margin: 0 auto 6px; }
.g-pdf .big svg { margin: 0 auto 4px; overflow: visible; }
.collapse { margin: auto 12px 7px auto; }

/* Formula bar */
.fbar { display: flex; align-items: center; padding: 8px 8px 7px; }
.fbox { display: flex; align-items: center; height: 26px; border: 1px solid #606060; border-radius: 4px; background: #282828; }
.fbox input { border: 0; outline: 0; background: none; flex: 1; min-width: 0; padding: 0 6px; }
.name { width: 102px; padding-right: 5px; }
.dots { width: 2px; height: 10px; margin: 0 9px; background: repeating-linear-gradient(#ddd 0 2px, transparent 2px 4px); }
.fx { width: 86px; justify-content: space-between; padding: 0 2px 0 6px; margin-right: 4px; }
.fn { font: italic bold 17px/20px "Liberation Serif", serif; color: #ccc; }
.formula { flex: 1; padding-right: 4px; }

/* Worksheet */
.sheet { flex: 1; min-height: 0; display: flex; background: #111; }
.pane { flex: 1; min-width: 0; display: flex; flex-direction: column; font-family: Lato, "Open Sans", sans-serif; }
.colhead { display: grid; grid-template-columns: 34px 23px 354px 133px 275px 241px 14px 241px 1fr; height: 24px; background: #0a0a0a; border-bottom: 1px solid #888; }
.colhead span { border-right: 1px solid #555; text-align: center; font: 15px/24px "Open Sans", sans-serif; color: #ddd; }
.colhead .corner { display: flex; align-items: flex-end; justify-content: flex-end; padding: 0 3px 3px 0; }
.colhead .sel { background: #666; box-shadow: inset 0 -1px #1e7a48; }
.view { flex: 1; min-height: 0; overflow: hidden; background: #fff; color: #000; }
table { width: 100%; margin-top: -12px; border-collapse: separate; border-spacing: 0; table-layout: fixed; font-size: 16px; line-height: 20px; }
.ch { width: 34px; } .ca { width: 23px; } .cb { width: 354px; } .cc { width: 133px; } .cd { width: 274px; } .ce { width: 242px; } .cf { width: 13px; }
.r5 { height: 5px; } .r7 { height: 7px; } .r24 { height: 24px; } .r25 { height: 25px; } .r28 { height: 28px; }
td, th { padding: 0; }
th { background: #0a0a0a; color: #ddd; font: 16px/20px "Open Sans", sans-serif; border-top: 1px solid #666; border-right: 1px solid #888; }
.cut { height: 6px; overflow: hidden; display: flex; align-items: flex-end; justify-content: center; }
.top { vertical-align: top; }
.lab { text-align: right; font-weight: 700; font-size: 17px; padding: 2px 3px 0 0; white-space: nowrap; }
.caps { font-size: 16px; }
.large { font-size: 20px; }
.ital { font-style: italic; padding-right: 6px; }
.acc { display: flex; justify-content: space-between; padding: 2px 10px 0 10px; }
.dash { padding-right: 19px; }
.total { height: 26px; line-height: 22px; background: #00b050; color: #fff; font-weight: 700; border-bottom: 3px double #000; }
.olive, .red, .amber { font-weight: 700; color: #fff; }
.olive { background: #4f6228; box-shadow: 0 1px #4f6228; }
.red { background: #f00; box-shadow: 0 1px #f00; }
.amber { background: #ffc000; color: #f00; box-shadow: 0 1px #ffc000; }
.bar { text-align: center; color: #fff; border-radius: 4px; height: 24px; line-height: 24px; font-size: 15px; }
.green { height: 21px; line-height: 22px; margin: 2px 27px 0 0; background: #4f6228; font-weight: 700; font-size: 16px; }
.navy { background: #002060; }
.crimson { margin: 2px 1px 0 0; background: #c00000; }
.date, .invest { border: 0 solid #000; border-width: 0 2px; }
.date { text-align: right; padding-right: 2px; background: #ccc0da; }
.first { border-top-width: 2px; }
.last { border-bottom-width: 2px; padding-top: 2px; }
.invest { border-top-width: 2px; background: #dce6f1; font-weight: 700; }
.invest .acc { padding: 0 8px; }
.vscroll { width: 22px; display: flex; flex-direction: column; align-items: center; padding: 5px 0 2px; }
.track { flex: 1; display: flex; flex-direction: column; justify-content: flex-end; padding-bottom: 44px; }
.thumb { border-radius: 5px; background: #999; }
.track .thumb { width: 9px; height: 72px; }

/* Sheet tabs */
.sheets { display: flex; align-items: center; height: 32px; padding-left: 16px; border-top: 1px solid #444; }
.nav { width: 32px; }
.tablist { display: flex; align-items: center; width: 626px; margin-left: 36px; overflow: hidden; height: 31px; }
.st { height: 24px; padding: 0 11px; border-radius: 4px; font-size: 13px; flex: none; }
.tablist i { width: 1px; height: 17px; margin: 0 4px; background: #555; flex: none; }
.tablist .active { height: 27px; align-self: flex-start; padding: 0 7px; border-radius: 0 0 5px 5px; border: 1px solid #fff; border-top: 0; background: linear-gradient(#fff, #aab0cc); color: #222; font-weight: 600; }
.active span { display: block; height: 22px; line-height: 20px; border-bottom: 2px solid #217346; }
.blue { background: #002060; }
.tablist .redtab { background: #f00; padding: 0 0 0 9px; border-radius: 4px 0 0 4px; flex: 1; text-align: left; }
.more { width: 32px; }
.hscroll { flex: 1; display: flex; align-items: center; padding: 0 24px 0 4px; }
.htrack { flex: 1; padding: 0 4px; }
.htrack .thumb { width: 65%; height: 9px; }

/* Status bar */
.status { display: flex; align-items: center; height: 22px; background: #141414; border-top: 1px solid #333; padding: 0 7px 0 11px; font-size: 11px; }
.acces { margin-left: 19px; gap: 4px; }
.acces b { font-weight: 600; }
.vw { width: 40px; height: 21px; display: flex; align-items: center; justify-content: center; }
.vw.on { background: #262626; }
.zb { width: 9px; margin: 0 5px; }
.zoom { appearance: none; width: 100px; height: 12px; background: linear-gradient(#999, #999) center / 100% 1px no-repeat; }
.zoom::-webkit-slider-thumb { appearance: none; width: 5px; height: 11px; background: #bbb; }
.pct { margin-left: 8px; }

/* Taskbar */
.taskbar { display: flex; align-items: center; height: 48px; color: #222; border-top: 1px solid #bbb; background: linear-gradient(90deg, #d9e2ca 0, #d8dfd4 18%, #dce4cf 38%, #d9e1cf 55%, #d8e0d2 66%, #dfe7b8 72%, #e8dfc8 78%, #eed9d2 88%, #ead9d8); }
.weather { flex: 308; display: flex; align-items: center; gap: 5px; padding-left: 19px; font-size: 11px; }
.weather small { font-size: 12px; color: #555; }
.cloud { position: relative; }
.badge { position: absolute; right: -1px; top: -10px; width: 16px; height: 16px; border-radius: 50%; background: #c42b1c; color: #fff; text-align: center; font-size: 10px; }
.apps { display: flex; align-items: center; gap: 6px; }
.app { position: relative; width: 38px; height: 38px; display: flex; align-items: center; justify-content: center; border-radius: 4px; }
.run::after, .cur::after { content: ""; position: absolute; left: 16px; bottom: 0; width: 6px; height: 3px; border-radius: 2px; background: #888; }
.cur { background: #f1f3ea; }
.cur::after { left: 12px; width: 15px; background: #0a6cc0; }
.prof { right: -2px; top: 1px; background: #5030a8; font-size: 9px; }
.search { display: flex; align-items: center; width: 218px; height: 31px; padding: 0 4px 0 9px; border: 1px solid #ccd2c4; border-radius: 16px; background: #f3f5ef; }
.search input { flex: 1; min-width: 0; border: 0; outline: 0; background: none; padding: 0 0 0 10px; }
.search input::placeholder { color: #666; }
.tray { flex: 439; display: flex; align-items: center; justify-content: flex-end; gap: 16px; padding-right: 21px; font-size: 11px; }
.lang { text-align: center; margin: 0 4px; }
.net { display: flex; align-items: center; gap: 8px; }
.clock { text-align: right; margin: 0 -8px 0 4px; }
```
